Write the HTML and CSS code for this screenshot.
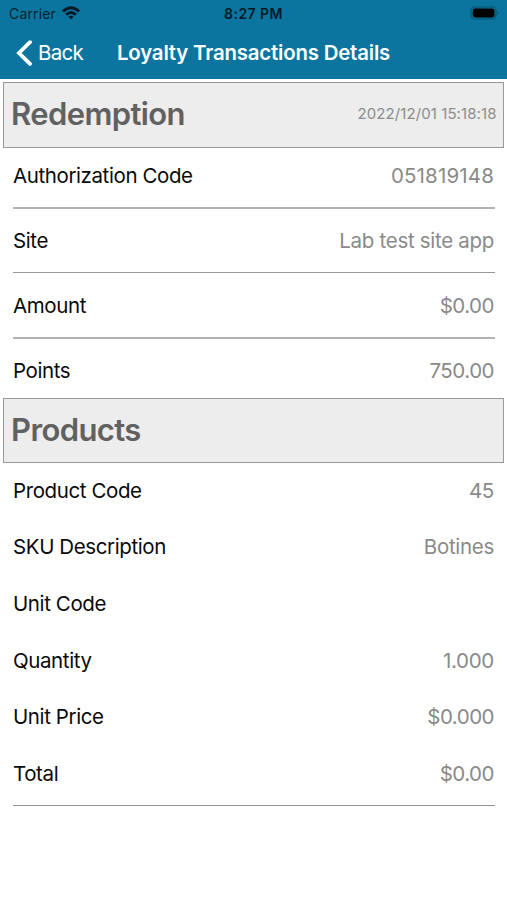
FILE: index.html
```html
<!DOCTYPE html>
<html lang="en">
<head>
<meta charset="utf-8">
<title>Loyalty Transactions Details</title>
<link rel="stylesheet" href="styles.css">
</head>
<body>
<header class="top">
  <div class="status">
    <div class="carrier"><span>Carrier</span>
      <svg class="wifi" viewBox="0 0 18 14"><path d="M0 4.5Q9-3.8 18 4.5L16 6.5Q9 .2 2 6.5Z"/><path d="M3.2 7.7Q9 2.5 14.8 7.7L12.8 9.7Q9 6.4 5.2 9.7Z"/><path d="M6.4 10.8Q9 8.6 11.6 10.8L9 13.6Z"/></svg>
    </div>
    <span class="clock">8:27 PM</span>
    <svg class="battery" viewBox="0 0 30 14"><rect x="1" y="1" width="25" height="12" rx="3.8" fill="none" stroke="#07536f" stroke-width="1.2"/><rect x="2.7" y="2.6" width="21.8" height="8.8" rx="2.4"/><path d="M27.8 5Q29.8 7 27.8 9Z" fill="#07536f"/></svg>
  </div>
  <nav class="nav">
    <a class="back"><svg class="chevron" viewBox="0 0 16 26"><path d="M14 2.2L3 13L14 23.8"/></svg><span class="back-label">Back</span></a>
    <h1 class="title">Loyalty Transactions Details</h1>
  </nav>
</header>
<main>
  <section>
    <div class="heading first"><h2>Redemption</h2><time>2022/12/01 15:18:18</time></div>
    <dl class="ruled">
      <div class="row"><dt>Authorization Code</dt><dd class="code">051819148</dd></div>
      <div class="row"><dt>Site</dt><dd>Lab test site app</dd></div>
      <div class="row"><dt>Amount</dt><dd class="number">$0.00</dd></div>
      <div class="row"><dt>Points</dt><dd class="number">750.00</dd></div>
    </dl>
  </section>
  <section>
    <div class="heading"><h2>Products</h2></div>
    <dl class="products">
      <div class="row"><dt>Product Code</dt><dd>45</dd></div>
      <div class="row"><dt>SKU Description</dt><dd>Botines</dd></div>
      <div class="row"><dt>Unit Code</dt><dd></dd></div>
      <div class="row"><dt>Quantity</dt><dd>1.000</dd></div>
      <div class="row"><dt>Unit Price</dt><dd class="number">$0.000</dd></div>
      <div class="row"><dt>Total</dt><dd class="number">$0.00</dd></div>
    </dl>
  </section>
</main>
</body>
</html>
```
FILE: styles.css
```css
* { box-sizing: border-box; }
body {
  margin: 0;
  background: #fff;
  color: #0a0a0a;
  font-family: Inter, "Liberation Sans", sans-serif;
}
h1, h2, dl, dt, dd { margin: 0; }
.top {
  height: 79px;
  background: #0b759f;
}
.status {
  display: grid;
  grid-template-columns: 1fr auto 1fr;
  align-items: center;
  height: 27px;
  padding: 0 7px 0 9px;
  color: #04222f;
  font-size: 14px;
}
.carrier { display: flex; align-items: center; gap: 6px; letter-spacing: 0.15px; }
.wifi { width: 18px; height: 14px; margin-top: -2px; fill: #021a25; }
.clock { font-weight: 600; letter-spacing: 0.45px; color: #021a25; margin-right: 2px; }
.battery { width: 30px; height: 14px; justify-self: end; margin-top: -1px; }
.nav {
  display: flex;
  align-items: center;
  height: 51px;
  padding-left: 16px;
  color: #fff;
}
.back { display: flex; align-items: center; gap: 6px; width: 101px; font-size: 20.5px; }
.back-label { letter-spacing: -0.75px; margin-top: -1px; }
.chevron { width: 16px; height: 26px; fill: none; stroke: #fff; stroke-width: 3.8; stroke-linecap: round; }
.title { font-size: 20.4px; font-weight: 600; letter-spacing: -0.18px; white-space: nowrap; padding-bottom: 1px; }
.heading {
  display: flex;
  align-items: center;
  justify-content: space-between;
  height: 65px;
  margin: 0 3px;
  padding: 0 7px 2px;
  border: 1px solid #999;
  background: #ededed;
}
.heading.first { height: 66px; margin-top: 3px; padding-bottom: 3px; }
h2 { color: #616161; font-size: 31px; font-weight: 600; letter-spacing: -0.6px; }
time { color: #8c8c8c; font-size: 15px; letter-spacing: 0.08px; margin-right: -0.5px; }
.row {
  display: flex;
  align-items: center;
  justify-content: space-between;
  font-size: 20.5px;
  letter-spacing: -0.4px;
}
.row dd { margin-right: 1px; color: #8a8a8a; letter-spacing: -0.3px; }
.row .number { letter-spacing: -0.5px; }
.row .code { letter-spacing: 0.15px; }
.ruled, .products { padding: 0 12px 0 13px; }
.ruled .row { height: 66px; border-bottom: 2px solid #b2b2b2; }
.ruled .row:first-child { height: 61px; padding-bottom: 5px; }
.ruled .row:nth-child(2) { height: 64px; border-bottom: 1px solid #999; }
.ruled .row:last-child { height: 59px; padding-top: 3px; border: 0; }
.products .row { height: 56.6px; padding-bottom: 2px; }
.products::after { content: ""; display: block; height: 1px; margin-top: 2px; background: #949494; }
```
